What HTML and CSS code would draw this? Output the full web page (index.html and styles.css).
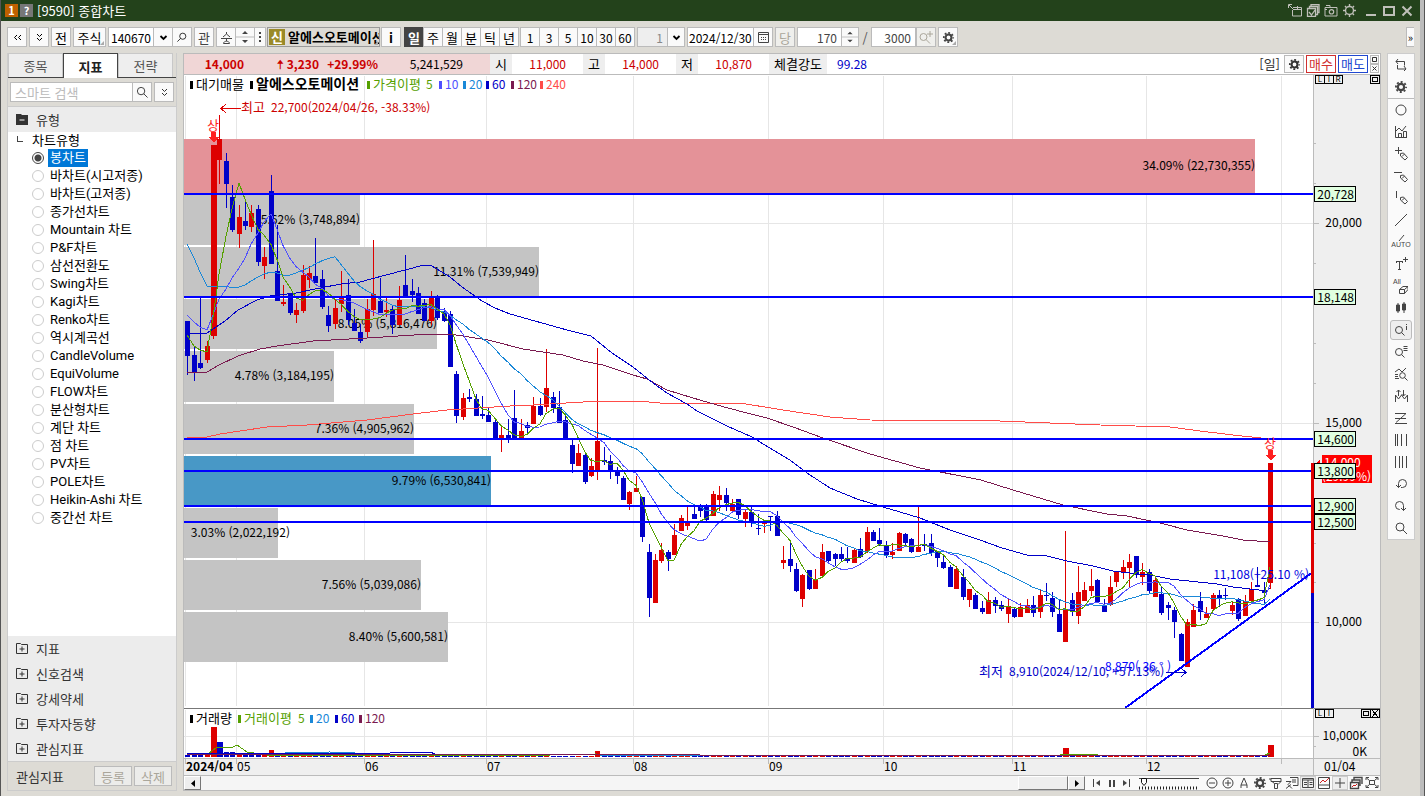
FILE: index.html
```html
<!DOCTYPE html>
<html lang="ko">
<head>
<meta charset="utf-8">
<title>[9590] 종합차트</title>
<link rel="stylesheet" href="styles.css">
</head>
<body>
<svg class="defs" aria-hidden="true">
  <symbol id="gear" viewBox="-1 -1 15 15"><circle cx="6.500" cy="6.500" r="3.400" fill="none" stroke="currentColor" stroke-width="2.400"/><circle cx="6.500" cy="6.500" r="5.400" fill="none" stroke="currentColor" stroke-width="2" stroke-dasharray="2.120 2.120" stroke-dashoffset="1"/></symbol>
  <symbol id="find" viewBox="0 0 13 13"><g fill="none" stroke="currentColor"><circle cx="5.500" cy="5.500" r="4"/><path d="M8.500 8.500l4 4"/></g></symbol>
  <symbol id="down" viewBox="0 0 9 9"><path d="M1.500 3l3 3 3-3" fill="none" stroke="currentColor" stroke-width="1.800"/></symbol>
  <symbol id="dbl" viewBox="0 0 9 9"><path d="M2 1l2.500 2.500L7 1M2 5l2.500 2.500L7 5" fill="none" stroke="currentColor"/></symbol>
  <symbol id="dblleft" viewBox="0 0 9 9"><path d="M4 2L1.500 4.500 4 7M8 2L5.500 4.500 8 7" fill="none" stroke="currentColor"/></symbol>
  <symbol id="spin" viewBox="0 0 18 18"><path d="M6 6l3-3 3 3zM6 12l3 3 3-3z" fill="currentColor"/><path d="M0 9h18" stroke="#bbb"/></symbol>
  <symbol id="plusbox" viewBox="0 0 12 11"><path d="M.5 10.500V.5h4l1 1h6v9zM6 3.500v5M3.500 6h5" fill="none" stroke="currentColor"/></symbol>
  <symbol id="pencil" viewBox="0 0 14 14"><path d="M6.500 6.500l3-.5 4 4.500-2.500 2.500L6.500 9zM8 9.500l2.500-2.500" fill="none" stroke="currentColor"/></symbol>
</svg>

<div class="window">
  <header class="titlebar">
    <span class="tag tag-num">1</span><span class="tag tag-help">?</span>
    <h1>[9590] 종합차트</h1>
    <div class="title-icons">
      <button aria-label="분리"><svg width="14" height="13" viewBox="0 0 14 13"><path d="M5 3.500h8.500v8.500h-9V6M5 5.500h8M9.500 2v3M1 1l4 4M.5 4V.5H4" fill="none" stroke="currentColor"/></svg></button>
      <button aria-label="선택 창"><svg width="14" height="13" viewBox="0 0 14 13"><path d="M1.500 4.500h8v8h-8zM3.500 4V2.500h8v8H10M5 2V.5h8v8h-1M3 8l2.500 3L9 6" fill="none" stroke="currentColor" stroke-width="1.300"/></svg></button>
      <button aria-label="캡처"><svg width="14" height="13" viewBox="0 0 14 13"><path d="M1 3.500h12v8.500H1zM2 1.500h4v2M1 5.500h2" fill="none" stroke="currentColor"/><circle cx="7.500" cy="7.800" r="2.200" fill="none" stroke="currentColor" stroke-width="1.200"/></svg></button>
      <button aria-label="설정"><svg width="13" height="13" viewBox="0 0 13 13"><circle cx="6.500" cy="6.500" r="4" fill="none" stroke="currentColor" stroke-width="1.400"/><path d="M6.500 0v2M6.500 11v2M0 6.500h2M11 6.500h2M2 2l1.400 1.400M9.600 9.600L11 11M2 11l1.400-1.400M9.600 3.400L11 2" stroke="currentColor" stroke-width="1.400"/></svg></button>
      <button class="first" aria-label="최소화"><svg width="12" height="12" viewBox="0 0 12 12"><path d="M1 10h10" stroke="currentColor" stroke-width="2"/></svg></button>
      <button aria-label="최대화"><svg width="12" height="12" viewBox="0 0 12 12"><path d="M1 2h10v8H1z" fill="none" stroke="currentColor" stroke-width="2"/></svg></button>
      <button aria-label="닫기"><svg width="12" height="12" viewBox="0 0 12 12"><path d="M1.500 1.500l9 9M10.500 1.500l-9 9" stroke="currentColor" stroke-width="2"/></svg></button>
    </div>
  </header>

  <div class="toolbar">
    <button class="tb" aria-label="이전"><svg width="9" height="9"><use href="#dblleft"/></svg></button>
    <button class="tb" aria-label="펼치기"><svg width="9" height="9"><use href="#dbl"/></svg></button>
    <button class="tb gap2">전</button>
    <button class="tb w33 gap2 corner">주식</button>
    <div class="group gap2"><input class="code" aria-label="종목코드" value="140670"><button aria-label="목록"><svg width="9" height="9"><use href="#down"/></svg></button><button aria-label="종목 찾기"><svg width="10" height="10" viewBox="0 0 13 13" class="flip"><use href="#find"/></svg></button></div>
    <button class="tb gap2 dim">관</button>
    <div class="group gap2"><button class="dim" aria-label="종 변경"><svg width="11" height="13" viewBox="0 0 11 13"><path d="M5.500 1v2L2 6M5.500 3L9 6M0 7.500h11M5.500 8v2M2.500 12.500c0-3 6-3 6 0z" fill="none" stroke="currentColor"/></svg></button><button class="dim" aria-label="종목 이동"><svg width="18" height="18"><use href="#spin"/></svg></button><button class="narrow dim" aria-label="더보기"><svg width="2" height="10" viewBox="0 0 2 10"><path d="M0 0h2v2H0zM0 4h2v2H0zM0 8h2v2H0z" fill="currentColor"/></svg></button></div>
    <div class="stock corner"><span class="new">신</span><b>알에스오토메이션</b></div>
    <button class="tb"><b>i</b></button>
    <div class="group gap3 period"><button class="on">일</button><button>주</button><button>월</button><button>분</button><button>틱</button><button>년</button></div>
    <div class="group gap1 numbers"><button>1</button><button>3</button><button>5</button><button>10</button><button>30</button><button>60</button></div>
    <div class="group gap2"><input class="count" aria-label="분 단위" value="1" disabled><button class="w18" aria-label="단위 목록"><svg width="9" height="9"><use href="#down"/></svg></button></div>
    <div class="group gap2"><input class="date" aria-label="날짜" value="2024/12/30"><button class="dim" aria-label="달력"><svg width="11" height="11" viewBox="0 0 11 11"><path d="M.5.500h10v10H.5zM1 2.500h9" fill="none" stroke="currentColor"/><path d="M3 5.500h6M3 7.500h6" stroke="currentColor" stroke-dasharray="1 1"/></svg></button></div>
    <button class="tb gap2 off" disabled>당</button>
    <div class="group gap2"><input class="num" aria-label="표시 개수" value="170"><button class="w18 dim" aria-label="개수 조절"><svg width="18" height="18"><use href="#spin"/></svg></button></div>
    <span class="slash">/</span>
    <input class="total" aria-label="전체 개수" value="3000">
    <button class="tb off" aria-label="추가 조회" disabled><svg width="14" height="13" viewBox="0 0 14 13"><circle cx="4.500" cy="6" r="3.500" fill="none" stroke="currentColor"/><path d="M7 8.500l4 4M11 0v6M8 3h6" stroke="currentColor"/></svg></button>
    <button class="tb corner dim" aria-label="차트 설정"><svg width="13" height="13"><use href="#gear"/></svg></button>
    <button class="more" aria-label="도구 더보기">»</button>
  </div>

  <div class="body">
    <aside class="side">
      <nav class="tabs"><button>종목</button><button class="active">지표</button><button>전략</button></nav>
      <form class="search"><input aria-label="스마트 검색" placeholder="스마트 검색"><button type="button" aria-label="검색"><svg width="12" height="12"><use href="#find"/></svg></button><button type="button" class="alone" aria-label="검색 옵션"><svg width="9" height="9"><use href="#dbl"/></svg></button></form>
      <h2 class="cat"><svg width="12" height="11" viewBox="0 0 12 11"><path d="M0 0h5l1 1h6v10H0z" fill="currentColor"/><path d="M3.500 6h5" stroke="#fff"/></svg>유형</h2>
      <fieldset class="tree">
        <legend>차트유형</legend>
        <label><input type="radio" name="type" checked><span>봉차트</span></label>
        <label><input type="radio" name="type"><span>바차트(시고저종)</span></label>
        <label><input type="radio" name="type"><span>바차트(고저종)</span></label>
        <label><input type="radio" name="type"><span>종가선차트</span></label>
        <label><input type="radio" name="type"><span>Mountain 차트</span></label>
        <label><input type="radio" name="type"><span>P&amp;F차트</span></label>
        <label><input type="radio" name="type"><span>삼선전환도</span></label>
        <label><input type="radio" name="type"><span>Swing차트</span></label>
        <label><input type="radio" name="type"><span>Kagi차트</span></label>
        <label><input type="radio" name="type"><span>Renko차트</span></label>
        <label><input type="radio" name="type"><span>역시계곡선</span></label>
        <label><input type="radio" name="type"><span>CandleVolume</span></label>
        <label><input type="radio" name="type"><span>EquiVolume</span></label>
        <label><input type="radio" name="type"><span>FLOW차트</span></label>
        <label><input type="radio" name="type"><span>분산형차트</span></label>
        <label><input type="radio" name="type"><span>계단 차트</span></label>
        <label><input type="radio" name="type"><span>점 차트</span></label>
        <label><input type="radio" name="type"><span>PV차트</span></label>
        <label><input type="radio" name="type"><span>POLE차트</span></label>
        <label><input type="radio" name="type"><span>Heikin-Ashi 차트</span></label>
        <label><input type="radio" name="type"><span>중간선 차트</span></label>
      </fieldset>
      <div class="folds">
        <button><svg width="12" height="11"><use href="#plusbox"/></svg>지표</button>
        <button><svg width="12" height="11"><use href="#plusbox"/></svg>신호검색</button>
        <button><svg width="12" height="11"><use href="#plusbox"/></svg>강세약세</button>
        <button><svg width="12" height="11"><use href="#plusbox"/></svg>투자자동향</button>
        <button><svg width="12" height="11"><use href="#plusbox"/></svg>관심지표</button>
      </div>
      <footer class="side-foot"><span>관심지표</span><button disabled>등록</button><button disabled>삭제</button></footer>
    </aside>

    <main class="panel">
      <div class="quote">
        <div class="now"><b>14,000</b><b>🠡 3,230</b><b>+29.99%</b><span class="vol">5,241,529</span></div>
        <span class="key">시</span><span class="val">11,000</span>
        <span class="key">고</span><span class="val">14,000</span>
        <span class="key">저</span><span class="val">10,870</span>
        <span class="key key-wide">체결강도</span><span class="power">99.28</span>
        <span class="unit">[일]</span>
        <button class="q-set" aria-label="주문 설정"><svg width="13" height="13"><use href="#gear"/></svg></button>
        <button class="buy">매수</button><button class="sell">매도</button>
        <div class="mini"><button aria-label="확대"><svg width="7" height="7" viewBox="0 0 7 7"><path d="M1.500 1.500h4v4h-4z" fill="none" stroke="currentColor"/></svg></button><button aria-label="닫기"><svg width="7" height="7" viewBox="0 0 7 7"><path d="M1.500 1.500l4 4M5.500 1.500l-4 4" stroke="currentColor"/></svg></button></div>
      </div>
      <svg class="chart" id="chart" viewBox="184 75 1196 700" role="img" aria-label="알에스오토메이션 일봉 차트"></svg>
      <div class="bottom">
        <button class="raised" aria-label="왼쪽"><svg width="4" height="7" viewBox="0 0 4 7"><path d="M4 0v7L0 3.500z"/></svg></button>
        <div class="track"><div class="thumb"></div></div>
        <button class="raised" aria-label="오른쪽"><svg width="4" height="7" viewBox="0 0 4 7"><path d="M0 0v7l4-3.500z"/></svg></button>
        <div class="play">
          <button aria-label="처음"><svg width="8" height="8" viewBox="0 0 8 8"><path d="M.5 0v8" stroke="currentColor"/><path d="M7 1v6L3 4z" fill="currentColor"/></svg></button>
          <button aria-label="정지"><svg width="8" height="8" viewBox="0 0 8 8"><path d="M2 1v7M6 1v7" stroke="currentColor" stroke-width="2"/></svg></button>
          <button aria-label="마지막"><svg width="8" height="8" viewBox="0 0 8 8"><path d="M7.500 0v8" stroke="currentColor"/><path d="M1 1v6l4-3z" fill="currentColor"/></svg></button>
        </div>
        <svg class="slider" width="62" height="13" viewBox="0 0 62 13"><path d="M1 1.500h60" stroke="#444"/><path d="M1 11h60" stroke="#222" stroke-width="3" stroke-dasharray="1 2"/><path d="M3.500 1.500h5v4L6 8.500 3.500 5.500z" fill="#fff" stroke="#111"/></svg>
        <div class="icons">
          <button aria-label="축소"><svg viewBox="0 0 14 14"><circle cx="7" cy="7" r="5"/><path d="M4 7h6"/></svg></button>
          <button aria-label="확대"><svg viewBox="0 0 14 14"><circle cx="7" cy="7" r="5"/><path d="M4 7h6M7 4v6"/></svg></button>
          <button aria-label="글자"><svg viewBox="0 0 14 14"><path d="M4 12V9l3-7 3 7v3M4 9h6"/></svg></button>
          <button aria-label="설정"><svg viewBox="0 0 14 14"><use href="#gear"/></svg></button>
          <button aria-label="서식"><svg viewBox="0 0 14 14"><path d="M2 2.500h10v3H2zM1 2v2M12 5.500l-3 3M3 5.500l2.500 2M5.500 7.500h3v5h-3z"/></svg></button>
          <button aria-label="지우기"><svg viewBox="0 0 14 14"><path d="M5 1.500h8v8H8M7 4h4M7 6h4M1 5.500h5l-3 3 4 4M1 12.500l5-4"/></svg></button>
          <button class="sel" aria-label="표"><svg viewBox="0 0 14 14"><path d="M1.500 2.500h11v9h-11zM1 4h12M7 4v7M3 6.500h3M3 8.500h3M8.500 6.500h3M8.500 8.500h3"/></svg></button>
          <button aria-label="차트 창"><svg viewBox="0 0 14 14"><path d="M1.500 1.500h11v11h-11zM2 9h10"/><path d="M3 7l3-3 2 2 4-4" stroke="#c22"/></svg></button>
          <button class="sel" aria-label="십자선"><svg viewBox="0 0 14 14"><path d="M7 2v10M2 7h10"/></svg></button>
          <button aria-label="겹쳐보기"><svg viewBox="0 0 14 14"><path d="M1.500 6.500h8v6h-8zM3 6V4h8v6M5 4V1.500h8V8" stroke-width="1.400"/><path d="M3 11l2-2 1 1 2-2" stroke="#c22"/></svg></button>
          <button aria-label="전체화면"><svg viewBox="0 0 14 14"><path d="M4.500 4.500h5v4h-5zM1 4V1.500h3M10 1.500h3V4M13 9v2.500h-3M4 11.500H1V9M1.500 2l3 2.500M12.500 2l-3 2.500M1.500 11l3-2.500M12.500 11l-3-2.500"/></svg></button>
        </div>
      </div>
    </main>

    <nav class="tools">
      <button aria-label="새로고침"><svg viewBox="0 0 14 14"><path d="M4 1L2 3.500 4 6M2 3.500h8.500v4M10 8l2 3-2 2M12 11H3.500V7"/></svg></button>
      <button class="sep" aria-label="설정"><svg viewBox="0 0 14 14"><use href="#gear"/></svg></button>
      <button aria-label="원"><svg viewBox="0 0 14 14"><circle cx="7" cy="7" r="5"/></svg></button>
      <button aria-label="지표 추가"><svg viewBox="0 0 14 14"><path d="M1.500 1v11.500H13M2 6l3-3 3 3 4-5M4.500 12V8.500h3V12M9.500 12V6.500h3V12"/></svg></button>
      <button aria-label="십자 그리기"><svg viewBox="0 0 14 14"><path d="M4.500 0v7M1 3.500h7"/><use href="#pencil"/></svg></button>
      <button aria-label="수평선"><svg viewBox="0 0 14 14"><path d="M0 3.500h8"/><use href="#pencil"/></svg></button>
      <button aria-label="수직선"><svg viewBox="0 0 14 14"><path d="M2.500 0v7"/><use href="#pencil"/></svg></button>
      <button aria-label="추세선"><svg viewBox="0 0 14 14"><path d="M1 13L13 1"/></svg></button>
      <button class="auto" aria-label="자동 추세선"><svg viewBox="0 0 14 6"><path d="M5 6l5-6"/></svg><i>AUTO</i></button>
      <button aria-label="글자"><svg viewBox="0 0 14 14"><path d="M2 4.500h7M5.500 4.500V12M4 12.500h3M2.500 4v2M8.500 4v2M11.500 0v5M9 2.500h5"/></svg></button>
      <button class="all" aria-label="모두 지우기"><i>All</i><svg viewBox="0 0 14 8"><path d="M5.500 3.500h5v4h-5zM5.500 3.500L9 .5h5l-3.500 3M14 .5v3l-3.500 4"/></svg></button>
      <button aria-label="봉"><svg viewBox="0 0 14 14"><path d="M2.500 4h3v6h-3zM8.500 3h3v6h-3z" fill="currentColor"/><path d="M4 2v10M10 1v11"/></svg></button>
      <button class="picked" aria-label="정보 돋보기"><svg viewBox="0 0 14 14"><circle cx="5" cy="7" r="3.500"/><path d="M7.500 9.500l3 3M12.500 3v4M12.500 1v1"/></svg></button>
      <button aria-label="목록 돋보기"><svg viewBox="0 0 14 14"><circle cx="5" cy="7" r="3.500"/><path d="M7.500 9.500l3 3M9.500 1.500h4M9.500 3.500h4M9.500 5.500h4"/></svg></button>
      <button aria-label="차트 분석"><svg viewBox="0 0 14 14"><path d="M1 5l4-3 3 3 4-4M1 7.500h3M1 9.500h3M1 11.500h4"/><circle cx="8.500" cy="8.500" r="2.800"/><path d="M10.500 10.500l3 3"/></svg></button>
      <button aria-label="파동"><svg viewBox="0 0 14 14"><path d="M1.500 13V6l3 4 3-4 3 4 3-4v7M4.500 7V1M2.500 3l2-2 2 2M9.500 1v6M7.500 5l2 2 2-2"/></svg></button>
      <button aria-label="피보나치"><svg viewBox="0 0 14 14"><path d="M1 2.500h11M1 7.500h11M1 12.500h12M12 2.500l-10 9"/></svg></button>
      <button aria-label="간격선"><svg viewBox="0 0 14 14"><path d="M1.500 1v12M3.500 1v12M7.500 1v12M12.500 1v12"/></svg></button>
      <button aria-label="등간격선"><svg viewBox="0 0 14 14"><path d="M1.500 1v12M5.500 1v12M8.500 1v12M12.500 1v12"/></svg></button>
      <button aria-label="되돌리기"><svg viewBox="0 0 14 14"><path d="M4.500 10.500V6.500a4 4 0 1 1 4 4H7M2 8l2.500 2.500L7 8"/></svg></button>
      <button aria-label="다시 실행"><svg viewBox="0 0 14 14"><path d="M9.500 11.500V6.500a4 4 0 1 0-4 4H6M7 9l2.500 2.500L12 9"/></svg></button>
      <button aria-label="확대"><svg viewBox="0 0 14 14"><circle cx="6" cy="6" r="4"/><path d="M9 9l4 4"/></svg></button>
    </nav>
  </div>
</div>
<script src="chart.js"></script>
</body>
</html>
```

FILE: styles.css
```css
* { box-sizing: border-box; }
body {
  margin: 0;
  font: 13px "Noto Sans CJK KR", sans-serif;
  color: #000;
  background: #dddbd5;
}
button, input { font: inherit; color: inherit; margin: 0; padding: 0; border: 0; border-radius: 0; background: none; }
button { display: flex; align-items: center; justify-content: center; }
.defs { display: none; }

.window {
  min-height: 100vh;
  display: grid;
  grid-template-rows: 21px 32px 1fr;
  border-left: 1px solid #555;
  border-right: 1px solid #555;
  box-shadow: inset -4px 0 #bcbcbc;
}

.titlebar { display: flex; align-items: center; gap: 2px; padding: 0 6px 0 4px; margin-right: 4px; background: #23421b; color: #fff; }
.titlebar h1 { margin: 0 0 0 2px; font-size: 13px; font-weight: 400; line-height: 20px; }
.tag { width: 13px; height: 13px; font-weight: 700; font-size: 11px; line-height: 13px; text-align: center; }
.tag-num { background: #c06000; }
.tag-help { background: #777; }
.title-icons { display: flex; margin-left: auto; gap: 4px; color: #c0c0ba; }
.title-icons button { width: 14px; }
.title-icons .first { margin-left: 4px; }

.toolbar { display: flex; align-items: center; padding: 0 10px 0 6px; }
.toolbar button, .toolbar input, .stock { height: 20px; border: 1px solid #bbb; background: #fafafa; flex: none; }
.tb, .group button { width: 20px; }
.group { display: flex; flex: none; }
.group button { margin-left: -1px; }
.group button:first-child { margin-left: 0; }
.group .narrow { width: 12px; }
.group .w18, .toolbar .w18 { width: 18px; }
.w33 { width: 33px; }
.gap1 { margin-left: 1px; }
.gap2 { margin-left: 2px; }
.gap3 { margin-left: 3px; }
.tb + .tb { margin-left: 2px; }
.dim { color: #444; }
.off { color: #aaa69a; }
.toolbar .off { background: #efefec; }
.flip { transform: scaleX(-1); }
.numbers button, .toolbar input { font-size: 12px; }
.toolbar input { background: #fff; text-align: right; padding: 0 4px; }
.toolbar .code { width: 46px; text-align: left; padding: 0 2px; }
.toolbar .count { width: 31px; background: #eee; color: #888; padding-right: 4px; }
.toolbar .date { width: 67px; text-align: left; padding: 0 1px; }
.toolbar .num { width: 45px; color: #444; }
.toolbar .total { width: 45px; color: #444; }
.slash { width: 12px; text-align: center; color: #555; }
.period .on { background: #444; border-color: #444; color: #fff; font-weight: 700; }
.corner { position: relative; }
.corner::after { content: ""; position: absolute; right: 1px; bottom: 1px; border: 2px solid #aaa; border-top-color: transparent; border-left-color: transparent; }
.toolbar .stock { display: flex; align-items: center; gap: 3px; width: 113px; margin: 0 1px; padding-left: 1px; background: #dddbd5; border-color: #999; overflow: hidden; white-space: nowrap; }
.stock b { line-height: 18px; }
.new { width: 16px; height: 16px; background: #9a8a28; color: #fff; font-weight: 700; line-height: 16px; text-align: center; flex: none; }
.toolbar .more { width: 8px; margin-left: auto; font-size: 11px; border-right: 0; }

.body { display: grid; grid-template-columns: 170px minmax(0, 1fr) 28px; gap: 6px; padding: 0 9px 5px 6px; align-items: start; }

.side { align-self: stretch; display: flex; flex-direction: column; border: 1px solid #ccc; border-top: 0; color: #333; }
.tabs { display: flex; height: 25px; border-bottom: 1px solid #444; }
.tabs button { width: 55px; background: #eee; border: 1px solid #c8c8c8; border-bottom: 0; color: #555; }
.tabs .active { height: 25px; background: #fff; border-color: #444; color: #222; font-weight: 700; }
.search { display: flex; height: 28px; padding: 4px 2px; }
.search input { flex: 1; min-width: 0; padding: 0 4px; border: 1px solid #bbb; background: #fff; }
.search input::placeholder { color: #bbb; }
.search button { width: 20px; margin-left: -1px; border: 1px solid #bbb; background: #fafafa; }
.search .alone { margin-left: 2px; }
.cat { display: flex; align-items: center; gap: 8px; height: 26px; margin: 0; padding-left: 8px; font-size: 13px; font-weight: 400; background: #ececec; border-top: 1px solid #ccc; }
.tree { flex: 1; margin: 0; border: 0; padding: 0; min-width: 0; background: #fff; color: #000; font-family: Roboto, "Noto Sans CJK KR", sans-serif; }
.tree legend { width: 100%; padding: 0 0 0 24px; line-height: 17px; position: relative; background: #fff; }
.tree legend::before { content: ""; position: absolute; left: 9px; top: 4px; width: 5px; height: 5px; border-left: 1px solid #444; border-bottom: 1px solid #444; }
.tree label { display: flex; align-items: center; height: 18px; padding-left: 24px; gap: 4px; }
.tree input { appearance: none; flex: none; width: 12px; height: 12px; border: 1px solid #ccc; border-radius: 50%; }
.tree input:checked { border-color: #444; background: radial-gradient(#444 0 3px, #fff 4px); }
.tree span { line-height: 18px; padding: 0 2px; white-space: nowrap; }
.tree input:checked + span { background: #0078d7; color: #fff; }
.folds { background: #ececec; }
.folds button { width: 100%; height: 25px; justify-content: flex-start; gap: 8px; padding-left: 8px; }
.side-foot { display: flex; align-items: center; gap: 2px; height: 29px; padding: 0 4px 0 8px; border-top: 1px solid #ccc; }
.side-foot span { flex: 1; }
.side-foot button { width: 38px; height: 20px; border: 1px solid #bbb; background: #ececea; color: #aaa69a; }

.panel { border: 1px solid #bbb; background: #fff; }
.quote { display: flex; align-items: stretch; height: 21px; line-height: 20px; border-bottom: 1px solid #bbb; color: #cc0000; }
.now { display: grid; grid-template-columns: 60px 75px 59px 85px; width: 306px; background: #f0d6d6; text-align: right; white-space: nowrap; }
.now, .val, .power { font-size: 12px; }
.vol, .key { color: #000; }
.key { width: 22px; background: #eee; text-align: center; }
.val { width: 71px; padding-right: 17px; text-align: right; }
.key-wide { width: 58px; }
.power { padding-left: 10px; color: #0000c8; }
.unit { margin-left: auto; padding-right: 4px; color: #333; }
.quote button { height: 18px; margin-top: 1px; border: 1px solid #bbb; background: #fafafa; }
.quote .q-set { width: 20px; margin-right: 2px; color: #333; }
.quote .buy, .quote .sell { width: 30px; margin-right: 2px; border-color: currentColor; color: #d03030; background: #fff; }
.quote .sell { color: #2048d0; }
.quote .mini button { width: 9px; height: 9px; margin: 0 1px 0 0; color: #333; }
.mini { padding-top: 1px; }

.chart { display: block; width: 100%; height: auto; shape-rendering: crispEdges; }
.chart text { font: 13px "Noto Sans CJK KR", sans-serif; white-space: pre; }
.chart .num { font-size: 12px; }
.chart .name { font-size: 14px; }
.chart .bold { font-weight: 700; }
.chart .end { text-anchor: end; }
.chart .mid { text-anchor: middle; }
.chart .tiny { font-size: 8px; text-anchor: middle; }
.chart .ma { fill: none; stroke-width: 1; }

.bottom { display: flex; height: 15px; border-top: 1px solid #bbb; background: #fafafa; color: #444; }
.raised { width: 17px; background: #eee; border: 1px solid; border-color: #fff #777 #777 #fff; flex: none; }
.track { flex: 1; display: flex; justify-content: flex-end; background: #f5f5f5; }
.thumb { width: 50px; background: #eee; border: 1px solid; border-color: #fff #777 #777 #fff; }
.play { display: flex; width: 53px; justify-content: space-evenly; padding: 0 2px; }
.slider { flex: none; margin: 1px 4px 0 0; }
.icons { display: flex; }
.icons button { width: 16px; height: 14px; flex: none; }
.icons svg, .tools svg { width: 14px; height: 14px; flex: none; fill: none; stroke: currentColor; }
.icons .sel { background: #eee; border: 1px solid #ccc; }

.tools { padding: 0; border: 1px solid #ccc; background: #fafafa; color: #444; }
.tools button { width: 26px; height: 22px; }
.tools .sep { height: 23px; border-bottom: 1px solid #bbb; }
.tools .picked { width: 22px; height: 20px; margin: 1px 2px; border: 1px solid #bbb; border-radius: 3px; background: #eee; }
.tools i { font: 7px/8px "Liberation Sans", sans-serif; }
.tools .auto, .tools .all { flex-direction: column; }
.tools .auto svg { height: 6px; }
.tools .all svg { height: 8px; }
.tools .all i { padding-right: 8px; }
```

FILE: chart.js
```js
// Each day: high, body top, body bottom, low (vertical positions), r = rise / b = fall
const days = `321,321,356,375b 347,355,373,381b 297,363,368,369b 341,346,360,363r 145,145,336,339r 115,139,160,184r 153,161,184,208b 185,197,230,232b 205,217,234,248r 201,221,226,230b
205,213,227,232r 205,209,262,266b 247,257,266,279r 175,191,264,264b 225,271,301,301b 285,302,304,306r 293,293,313,315b 303,310,315,323r 265,275,311,313r 266,273,280,288r
238,276,283,283b 270,279,307,309b 306,315,326,332b 300,308,324,329r 271,297,304,312r 279,295,320,325b 309,323,331,331b 324,332,341,343b 299,309,332,337r 240,294,310,316r
278,301,313,313b 297,310,312,317r 306,309,325,334b 286,300,325,325r 255,285,297,297b 279,291,295,302b 287,293,314,314b 299,303,321,321b 291,296,321,325r 295,296,318,320b
308,311,321,322b 311,314,367,367b 371,374,416,423b 393,398,417,420r 389,397,399,402b 394,399,416,416b 396,414,416,419b 408,415,422,422b 418,422,439,440b 425,435,439,452r
419,435,439,443b 390,418,439,439b 419,431,438,438r 422,425,428,433b 397,406,424,424r 398,406,415,416b 349,388,407,412r 392,397,408,413b 391,407,423,423b 415,420,439,439b
439,445,464,473b 444,453,466,466r 454,455,482,484b 458,466,476,477r 348,441,471,480r 447,460,462,465b 455,461,471,479b 467,471,476,484b 476,478,500,500b 491,492,504,510r
476,488,492,492r 497,497,537,542b 544,552,598,617b 554,560,603,603r 543,550,561,563r 550,552,559,571b 524,535,555,555r 515,518,531,531r 506,523,526,530r 505,514,519,519b
504,506,511,517b 504,505,520,521b 491,494,516,516r 486,495,500,511r 488,495,503,511b 499,504,511,511r 499,499,515,519b 510,512,519,527r 506,512,523,527b 514,528,529,535b
520,523,524,533r 516,516,517,531b 511,516,536,536b 546,560,563,569r 543,559,566,572b 563,569,591,592b 574,575,599,607r 570,570,589,590b 569,580,589,589r 544,552,576,576r
551,551,561,562b 553,554,559,566b 547,554,559,561b 547,558,561,563b 549,550,563,563r 538,549,557,558b 527,532,551,553r 530,532,541,541b 528,540,544,546b 541,546,555,558b
543,552,555,559r 532,533,551,551r 533,534,543,545b 538,539,552,553b 507,547,552,552r 534,544,546,551b 534,543,553,556b 551,551,558,567b 555,562,568,569b 565,567,587,587b
566,569,589,589r 569,577,597,600b 589,589,600,607r 593,595,609,609b 601,608,612,614b 592,600,614,614r 597,600,606,613b 601,605,609,611b 598,606,614,623r 608,609,617,618b
603,607,617,617r 599,605,613,613r 596,605,613,617b 590,595,612,618r 583,595,596,601b 592,598,612,617b 599,614,632,632b 531,609,642,642r 593,600,611,616b 566,592,616,624r
582,590,601,601r 569,586,591,596r 579,580,602,603b 599,605,612,612b 576,587,605,606r 571,571,582,587r 560,567,572,579r 554,562,568,587r 556,556,575,578b 563,572,577,585r
569,572,591,593b 577,580,597,597r 586,594,613,615b 602,605,608,620b 607,610,622,638b 633,634,661,661b 619,622,667,667r 604,610,627,627r 592,601,612,620b 607,614,618,618r
593,595,609,610r 590,595,599,607b 588,595,596,600b 601,605,611,615r 598,599,619,621b 595,601,616,616r 582,589,601,601r 567,585,587,587b 582,590,593,605b 463,463,583,589r`
  .split(/\s+/).map(s => ({ v: s.slice(0, -1).split(',').map(Number), up: s.endsWith('r') }));

const RED = '#dd0000', NAVY = '#0000c8', GRID = '#e6e6e6';
const C5 = '#55a000', C10 = '#5050ff', C20 = '#1a88d8', C120 = '#7a1a50', C240 = '#ff4c48';
const xAt = i => Math.round(187.3 + 6.408 * i);
const out = [];
const rect = (x, y, w, h, f) => out.push(`<rect x="${x}" y="${y}" width="${w}" height="${h}" fill="${f}"/>`);
const text = (x, y, s, f = '#000', c = '') =>
  out.push(`<text x="${x}" y="${y}" fill="${f}" class="${/[가-힣]/.test(s) || c === 'tiny' ? '' : 'num '}${c}">${s}</text>`);
const line = (pts, c) => out.push(`<polyline class="ma" points="${pts}" stroke="${c}"/>`);

// background and grid
rect(184, 75, 1129, 683, '#fff');
const months = [[185, ''], [236, '05'], [364, '06'], [486, '07'], [633, '08'], [768, '09'], [883, '10'], [1012, '11'], [1146, '12'], [1281, '']];
months.forEach(([x]) => { rect(x, 76, 1, 630, GRID); rect(x, 710, 1, 48, GRID); });
[223, 423, 622, 736].forEach(y => rect(184, y, 1129, 1, GRID));

// volume by price
[[139, 54, 1255, '34.09% (22,730,355)', '#e49298'], [195, 50, 360, '5.62% (3,748,894)'], [247, 50, 539, '11.31% (7,539,949)'],
 [299, 50, 437, '8.05% (5,816,476)'], [351, 51, 334, '4.78% (3,184,195)'], [404, 50, 414, '7.36% (4,905,962)'],
 [456, 50, 491, '9.79% (6,530,841)', '#4898c6'], [508, 50, 278, '3.03% (2,022,192)'], [560, 50, 421, '7.56% (5,039,086)'],
 [612, 50, 448, '8.40% (5,600,581)']].forEach(([y, h, r, label, c = '#c4c4c4']) => {
  rect(184, y, r - 184, h, c);
  text(Math.max(r, 290), y < 150 ? 170 : y + 29, label, '#000', 'end');
});

// candles
days.forEach(({ v: [hi, top, bot, lo], up }, i) => {
  const x = xAt(i), c = up ? RED : NAVY;
  rect(x, hi, 1, Math.max(lo - hi, 1), c);
  rect(x - 2, top, i === 4 ? 6 : 5, Math.max(bot - top, 1), c);
});

// moving averages
const closes = days.map(d => d.up ? d.v[1] : d.v[2]);
const average = (n, head) => closes.map((_, i) => {
  const y = i < n - 1 ? head[i] : closes.slice(i - n + 1, i + 1).reduce((a, b) => a + b) / n;
  return `${xAt(i)},${y.toFixed(1)}`;
}).join(' ');
line('187,438 207,437 220,434 267,427 307,425 367,420 413,414 447,410 510,406 533,405 583,402 613,401 637,401 660,403 740,403 783,410 830,417 870,420 1000,421 1100,425 1170,427 1200,431 1233,435 1270,439', C240);
line('187,372 207,372 219,365 238,356 260,349 277,346 313,341 367,338 430,334 450,334 488,340 523,349 563,355 583,361 603,365 633,375 647,379 667,390 693,398 717,405 743,412 767,418 793,427 823,438 870,454 920,468 981,480 1013,490 1043,499 1063,505 1107,514 1127,516 1160,523 1187,530 1223,536 1243,540 1270,542', C120);
line('187,333 207,333 213,329 225,321 238,310 257,300 270,296 296,293 315,289 341,284 360,282 386,275 405,270 424,265 432,266 450,277 462,287 482,301 495,308 510,314 567,330 591,336 612,353 633,367 653,383 667,393 687,404 697,411 727,426 752,437 768,447 790,460 807,473 830,488 857,499 883,507 900,512 920,518 950,530 980,540 1002,548 1027,555 1047,556 1067,561 1093,566 1113,571 1155,576 1170,579 1217,584 1233,587 1267,591 1270,588', NAVY);
line(average(20, [244, 258, 272, 286, 286, 286, 286, 288, 287, 285, 281, 277, 274, 272, 273, 275, 275, 273, 270]), C20);
line(average(10, [315, 322, 327, 330, 315, 299, 289, 278, 268]), C10);
line(average(5, [335, 346, 350, 352]), C5);

// price levels and trend line
const levels = [[194, '20,728'], [297, '18,148'], [439, '14,600'], [471, '13,800'], [506, '12,900'], [522, '12,500']];
levels.forEach(([y]) => rect(184, y - 1, 1130, 2, '#0000ff'));
out.push('<path d="M1125 708L1313 572" stroke="#0000ff" stroke-width="2"/>');

// notes
const limit = (x, y) => {
  text(x, y, '상', '#ff2020', 'mid');
  out.push(`<path d="M${x - 2} ${y + 2}h5v5h3l-5 6-5-6h2z" fill="#ff2020"/>`);
};
out.push('<path d="M221 108.500h20M226 104l-5 4.500 5 4.500" fill="none" stroke="#d00"/>');
text(241, 112, '최고', '#cc0000');
text(271, 112, '22,700(2024/04/26, -38.33%)', '#cc0000');
limit(213, 130);
limit(1270, 448);
text(979, 676, '최저', NAVY);
text(1009, 676, '8,910(2024/12/10, +57.13%)', NAVY);
out.push('<path d="M1166 672.500h20M1181 668l5 4.500-5 4.500" fill="none" stroke="#0000c8"/>');
text(1105, 671, '8,870( 36 ° )', '#0000ff');
text(1309, 579, '11,108(+25.10 %)', '#0000e0', 'end');

// legends
const mark = (x, y, c) => rect(x, y, 3, 8, c);
[[190, 196, '대기매물', '#000'], [250, 256, '알에스오토메이션', '#000', 'bold name'], [367, 373, '가격이평', C5], [0, 426, '5', C5],
 [439, 445, '10', C10], [463, 469, '20', C20], [486, 492, '60', NAVY], [511, 517, '120', C120], [540, 546, '240', C240]]
  .forEach(([m, x, s, c, k]) => { if (m) mark(m, 81, c); text(x, 89, s, c, k); });

// volume pane
rect(184, 708, 1196, 1, '#777');
const volumes = { 4: 30, 5: 15, 6: 5, 7: 5, 8: 4, 9: 4, 10: 3, 11: 3, 12: 2, 13: 7, 14: 4, 15: 2, 16: 2, 64: 6, 137: 9, 139: 3, 169: 12 };
days.forEach((d, i) => {
  const h = volumes[i] || (i < 4 ? 2 : 1);
  rect(xAt(i) - 2, 757 - h, h > 8 ? 6 : 5, h, [4, 8, 13, 64, 137, 139, 169].includes(i) || (h < 3 && d.up) ? RED : NAVY);
});
line('187,755 208,754 217,747 233,747 237,745 247,752 267,755 300,755 550,755 596,754 615,755 1060,755 1075,754 1092,754 1098,755 1265,755 1270,753', C5);
line('187,755 240,754 330,752 380,754 600,755 1270,755', C20);
line('187,753 390,753 395,752 430,752 435,754 640,754 700,755 1270,755', NAVY);
line('187,754 600,754 700,755 1270,755', C120);
[[190, 196, '거래량', '#000'], [238, 244, '거래이평', C5], [0, 298, '5', C5], [310, 316, '20', C20], [335, 341, '60', NAVY], [359, 365, '120', C120]]
  .forEach(([m, x, s, c]) => { if (m) mark(m, 715, c); text(x, 723, s, c); });

// time axis
rect(184, 758, 1196, 17, '#efefef');
rect(184, 758, 1130, 1, '#bbb');
months.forEach(([x, s]) => { rect(x, 758, 1, 6, '#bbb'); text(x + 1, 771, s); });
text(186, 771, '2024/04', '#000', 'bold');

// price axis
rect(1314, 75, 66, 633, '#efefef');
rect(1314, 709, 66, 66, '#efefef');
rect(1313, 75, 1, 700, '#bbb');
rect(1314, 758, 66, 1, '#bbb');
rect(1311, 463, 3, 130, RED);
rect(1311, 593, 3, 115, NAVY);
[143, 183, 263, 343, 383, 543, 582, 746].forEach(y => rect(1314, y, 2, 1, '#bbb'));
[[223, '20,000'], [423, '15,000'], [622, '10,000']].forEach(([y, s]) => { rect(1314, y, 5, 1, '#bbb'); text(1362, y + 4, s, '#000', 'end'); });
rect(1314, 736, 5, 1, '#bbb');
text(1367, 740, '10,000K', '#000', 'end');
text(1367, 756, '0K', '#000', 'end');
text(1324, 771, '01/04');
rect(1322, 455, 50, 28, '#ff0000');
out.push('<path d="M1320 459v5h-5z" fill="#ff0000"/>');
text(1324, 467, '14,000', '#fff');
text(1371, 481, '(29.99%)', '#fff', 'end');
levels.forEach(([y, s]) => {
  rect(1314, y - 8, 42, 16, '#000');
  rect(1315, y - 7, 40, 14, '#e0ffe0');
  text(1354, y + 5, s, '#000', 'end');
});

// pane buttons
const box = (x, y, s) => {
  rect(x, y, 10, 9, '#000');
  rect(x + 1, y + 1, 8, 7, '#efefef');
  if (s === 'box') { rect(x + 2, y + 2, 6, 5, '#000'); rect(x + 3, y + 3, 4, 3, '#efefef'); }
  else if (s === 'x') out.push(`<path d="M${x + 2} ${y + 1}l6 7M${x + 8} ${y + 1}l-6 7" stroke="#000"/>`);
  else text(x + 5, y + 7, s, '#000', 'tiny');
};
box(1315, 75, 'L'); box(1324, 75, 'I'); box(1333, 75, 'R'); box(1370, 75, 'box');
box(1315, 709, 'L'); box(1324, 709, 'I'); box(1361, 709, 'box'); box(1370, 709, 'x');

document.getElementById('chart').innerHTML = out.join('');
```
